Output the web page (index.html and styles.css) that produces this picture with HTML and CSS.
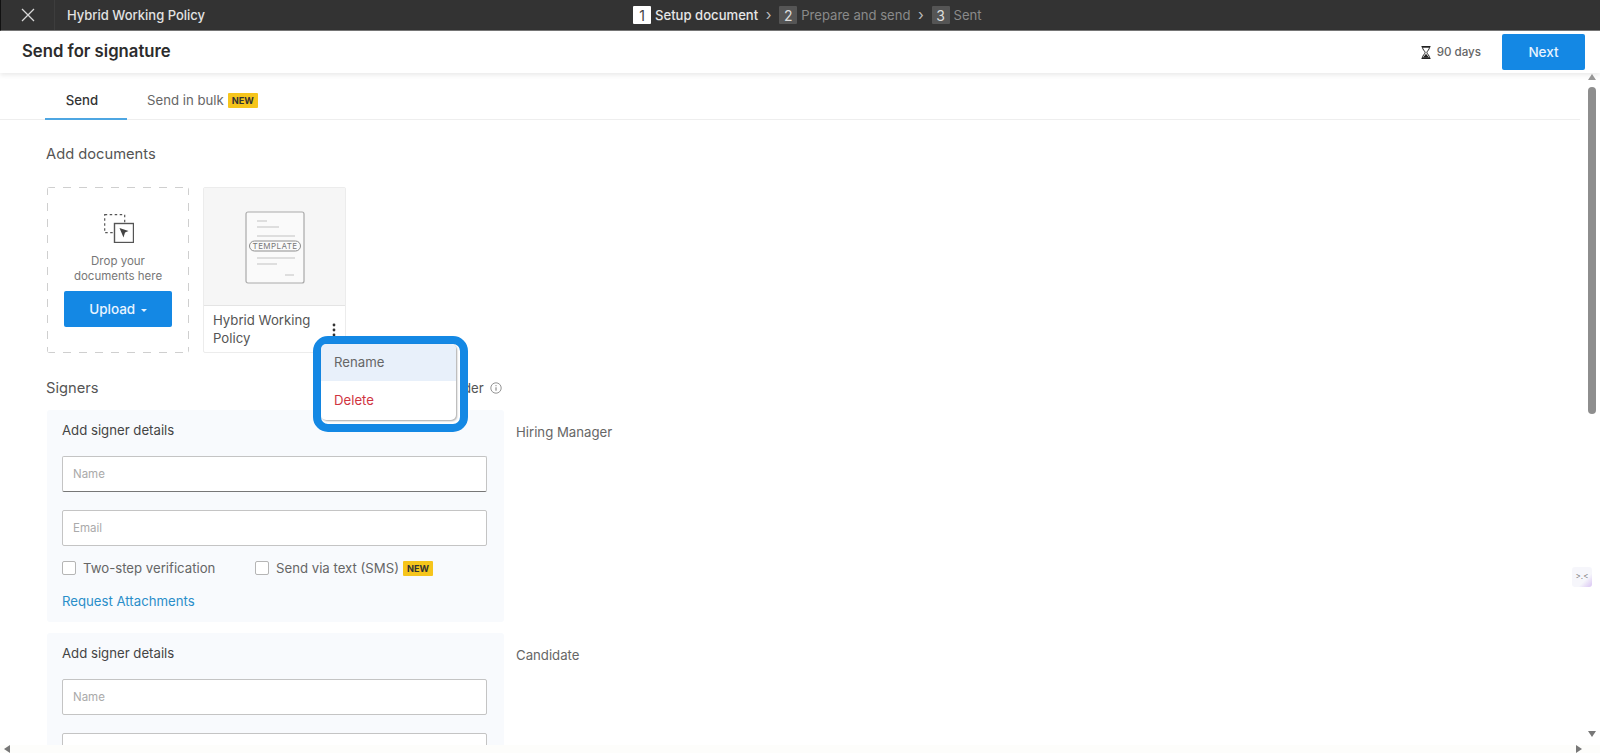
FILE: index.html
```html
<!DOCTYPE html>
<html lang="en">
<head>
<meta charset="utf-8">
<title>Send for signature</title>
<link rel="stylesheet" href="styles.css">
</head>
<body>
<div class="app">
  <div class="topbar">
    <div class="close-cell">
      <svg width="14" height="14" viewBox="0 0 14 14"><path d="M1 1l12 12M13 1L1 13" stroke="#d8d8d8" stroke-width="1.3" fill="none"/></svg>
    </div>
    <div class="doc-title">Hybrid Working Policy</div>
    <div class="steps">
      <span class="step-num step-num-on">1</span><span class="step-label step-label-on">Setup document</span>
      <span class="step-sep">›</span>
      <span class="step-num">2</span><span class="step-label">Prepare and send</span>
      <span class="step-sep">›</span>
      <span class="step-num">3</span><span class="step-label">Sent</span>
    </div>
  </div>

  <header class="header">
    <h1 class="page-title">Send for signature</h1>
    <div class="expiry">
      <svg width="12" height="13" viewBox="0 0 12 13"><path d="M1.5 .7h9M1.5 12.3h9" stroke="#222" stroke-width="1.3"/><path d="M2.5 1.2h7c0 2.6-2.4 3.6-2.6 5.3.2 1.7 2.6 2.7 2.6 5.3h-7c0-2.600 2.400-3.600 2.600-5.300C4.900 4.800 2.500 3.800 2.500 1.200z" fill="#fff" stroke="#222"/><path d="M3.500 11.500c.3-1.800 2-2.600 2.500-3.800.5 1.200 2.200 2 2.500 3.800z" fill="#222"/></svg>
      <span>90 days</span>
    </div>
    <button class="btn btn-next">Next</button>
  </header>

  <div class="main">
    <div class="content">
      <nav class="tabs">
        <a class="tab tab-active">Send</a>
        <a class="tab">Send in bulk<span class="badge">NEW</span></a>
      </nav>

      <section class="documents">
        <h2 class="section-title">Add documents</h2>
        <div class="doc-row">
          <div class="dropzone">
            <svg class="drop-icon" width="30" height="29" viewBox="0 0 30 29">
              <rect x=".7" y=".7" width="20" height="18" fill="none" stroke="#555" stroke-width="1.200" stroke-dasharray="2.500 2.500"/>
              <rect x="10.500" y="9.500" width="19" height="19" fill="#fff" stroke="#555" stroke-width="1.400"/>
              <path d="M15.500 14l9 3-3.500 1.500-1.500 5z" fill="#444"/>
            </svg>
            <p class="drop-text">Drop your<br>documents here</p>
            <button class="btn btn-upload">Upload <span class="caret"></span></button>
          </div>
          <div class="doc-card">
            <div class="doc-thumb">
              <svg width="60" height="73" viewBox="0 0 60 73">
                <rect x="1" y="1" width="58" height="71" rx="2" fill="#fafafa" stroke="#a9a9a9" stroke-width="1.200"/>
                <path d="M12 10h10M12 16h22M12 25h38M12 47h38M12 53h20M40 64h9" stroke="#c2c2c2" stroke-width="1.200"/>
                <rect x="4.500" y="30" width="51" height="10" rx="5" fill="#fafafa" stroke="#8e8e8e"/>
                <text x="30" y="38" class="thumb-text" text-anchor="middle">TEMPLATE</text>
              </svg>
            </div>
            <div class="doc-foot">
              <span class="doc-name">Hybrid Working Policy</span>
              <svg class="doc-more" width="4" height="14" viewBox="0 0 4 14"><circle cx="2" cy="2" r="1.400"/><circle cx="2" cy="7" r="1.400"/><circle cx="2" cy="12" r="1.400"/></svg>
            </div>
          </div>
        </div>
      </section>

      <section class="signers">
        <div class="signers-head">
          <h2 class="section-title">Signers</h2>
          <span class="order">Signing order</span>
          <svg class="info" width="12" height="12" viewBox="0 0 12 12"><circle cx="6" cy="6" r="5.200" fill="none" stroke="#888" stroke-width=".9"/><path d="M6 5.300v3.400M6 3.200v1" stroke="#777"/></svg>
        </div>

        <div class="signer-row">
          <div class="signer-panel">
            <h3 class="panel-title">Add signer details</h3>
            <div class="field field-dark">Name</div>
            <div class="field">Email</div>
            <div class="checks">
              <label class="check check-first"><span class="box"></span>Two-step verification</label>
              <label class="check"><span class="box"></span>Send via text (SMS)<span class="badge">NEW</span></label>
            </div>
            <a class="link">Request Attachments</a>
          </div>
          <div class="role">Hiring Manager</div>
        </div>

        <div class="signer-row">
          <div class="signer-panel">
            <h3 class="panel-title">Add signer details</h3>
            <div class="field">Name</div>
            <div class="field"></div>
          </div>
          <div class="role">Candidate</div>
        </div>
      </section>

      <div class="menu-ring">
        <div class="menu">
          <div class="menu-item menu-item-hover">Rename</div>
          <div class="menu-item menu-item-danger">Delete</div>
        </div>
      </div>
    </div>

    <div class="vscroll">
      <span class="arrow arrow-up"></span>
      <span class="thumb"></span>
      <span class="arrow arrow-down"></span>
    </div>
  </div>

  <div class="hscroll">
    <span class="arrow arrow-left"></span>
    <span class="arrow arrow-right"></span>
  </div>

  <div class="widget"><span>&gt;.&lt;</span></div>
</div>
</body>
</html>
```

FILE: styles.css
```css
* { box-sizing: border-box; }
html, body { margin: 0; height: 100%; overflow: hidden; }
body { font-family: Inter, "Liberation Sans", sans-serif; color: #444; background: #fff; font-size: 14px; }

.app { position: relative; display: flex; flex-direction: column; height: 753px; overflow: hidden; }

/* top bar */
.topbar { position: relative; flex: none; height: 31px; background: #333; border-left: 1px solid #111; border-bottom: 1px solid #777; display: flex; align-items: center; color: #ddd; }
.close-cell { width: 54px; height: 30px; display: flex; align-items: center; justify-content: center; border-right: 1px solid #3d3d3d; }
.doc-title { margin-left: 12px; font-size: 13px; font-weight: 500; color: #e2e2e2; }
.steps { position: absolute; left: 632px; top: 6px; display: flex; align-items: center; height: 18px; font-size: 13.100px; }
.step-num { width: 18px; height: 18px; display: flex; align-items: center; justify-content: center; background: #555; color: #ddd; border-radius: 1px; font-size: 14px; }
.step-num-on { background: #fff; color: #444; }
.step-label { margin-left: 4px; color: #8a8a8a; white-space: nowrap; }
.step-label-on { color: #e6e6e6; font-weight: 500; }
.step-sep { width: 21px; text-align: center; color: #bbb; font-size: 15px; line-height: 18px; }

/* header */
.header { position: relative; z-index: 2; flex: none; height: 42px; display: flex; align-items: center; padding: 0 15px 0 22px; background: #fff; box-shadow: 0 2px 5px rgba(0,0,0,.09); }
.page-title { margin: 0 0 2px; font-size: 16.700px; font-weight: 600; color: #2c2c2c; }
.expiry { margin-left: auto; display: flex; align-items: center; gap: 5px; font-size: 11.600px; font-weight: 500; color: #666; }
.btn { border: 0; border-radius: 2px; background: #1488e4; color: #e8f4ff; font: 500 13.500px Inter, "Liberation Sans", sans-serif; }
.btn-next { margin-left: 21px; width: 83px; height: 36px; }

/* main */
.main { flex: 1; min-height: 0; display: flex; }
.content { position: relative; flex: 1; min-width: 0; overflow: hidden; }
.tabs { display: flex; height: 47px; margin-right: 4px; padding-left: 45px; border-bottom: 1px solid #eee; }
.tab { display: flex; align-items: center; justify-content: center; height: 46px; font-size: 13.200px; color: #666; padding-top: 8px; }
.tab:first-child { width: 82px; margin-right: 20px; padding-right: 8px; }
.tab-active { font-weight: 500; color: #333; border-bottom: 2px solid #4ea6e2; height: 47px; }
.badge { display: inline-block; margin-left: 4px; padding: 0 4px; height: 15px; background: #f6c51c; border-radius: 1px; color: #333; font-size: 9.200px; font-weight: 700; line-height: 15px; }

.documents { padding: 24px 0 0 46px; }
.section-title { margin: 0; font-size: 14.700px; font-weight: 400; color: #555; line-height: 20px; }
.doc-row { display: flex; gap: 14px; margin-top: 23px; margin-left: 1px; }
.dropzone {
  width: 142px; height: 166px; border-radius: 3px; display: flex; flex-direction: column; align-items: center; padding-top: 27px;
  background:
    repeating-linear-gradient(90deg, #cfcfcf 0 8px, transparent 8px 16px) top / 100% 1px no-repeat,
    repeating-linear-gradient(90deg, #cfcfcf 0 8px, transparent 8px 16px) bottom / 100% 1px no-repeat,
    repeating-linear-gradient(180deg, #cfcfcf 0 8px, transparent 8px 16px) left / 1px 100% no-repeat,
    repeating-linear-gradient(180deg, #cfcfcf 0 8px, transparent 8px 16px) right / 1px 100% no-repeat;
}
.drop-icon { flex: none; margin-left: 2px; }
.drop-text { margin: 11px 0 0; font-size: 11.500px; line-height: 15px; color: #777; text-align: center; }
.btn-upload { flex: none; margin-top: 7px; width: 108px; height: 36px; }
.caret { display: inline-block; margin-left: 2px; vertical-align: 2px; border: 3.500px solid transparent; border-top-color: #e8f4ff; border-bottom: 0; }
.doc-card { width: 143px; height: 166px; border: 1px solid #ececec; border-radius: 2px; display: flex; flex-direction: column; }
.doc-thumb { flex: none; height: 118px; background: #f6f6f6; border-bottom: 1px solid #e4e4e4; display: flex; justify-content: center; padding-top: 23px; }
.thumb-text { font: 8px Inter, "Liberation Sans", sans-serif; letter-spacing: .4px; fill: #777; }
.doc-foot { position: relative; padding: 5px 24px 0 9px; font-size: 13.200px; line-height: 18px; color: #555; }
.doc-more { position: absolute; right: 9px; top: 17px; fill: #333; }

.signers { padding: 25px 0 0 46px; }
.signers-head { position: relative; display: flex; align-items: center; height: 20px; }
.order { position: absolute; left: 354px; font-size: 13.200px; color: #555; white-space: nowrap; }
.info { position: absolute; left: 444px; top: 4px; }
.signer-row { display: flex; margin-top: 12px; margin-left: 1px; }
.signer-row + .signer-row { margin-top: 11px; }
.signer-panel { flex: none; width: 457px; padding: 10px 17px 11px 15px; background: #f8fafd; border-radius: 3px; }
.role { margin: 14px 0 0 12px; font-size: 13.200px; color: #666; }
.panel-title { margin: 0; font-size: 13.200px; font-weight: 400; color: #444; line-height: 20px; }
.field { height: 36px; margin-top: 16px; padding-left: 10px; background: #fff; border: 1px solid #c4c4c4; border-radius: 2px; font-size: 11.500px; line-height: 34px; color: #aaa; }
.field + .field { margin-top: 18px; }
.field-dark { border-bottom-color: #777; }
.checks { display: flex; margin-top: 12px; }
.check { display: flex; align-items: center; font-size: 13.200px; color: #666; height: 20px; }
.check-first { width: 193px; }
.box { width: 14px; height: 14px; margin-right: 7px; background: #fff; border: 1px solid #b5b5b5; border-radius: 2px; }
.link { display: block; margin-top: 13px; font-size: 13.200px; line-height: 20px; color: #2a8ec9; }

/* overlays */
.menu-ring { position: absolute; left: 313px; top: 263px; width: 155px; height: 96px; padding: 0 4px 4px 0; background: #fff; border: 8px solid #1488e4; border-radius: 15px; }
.menu { height: 100%; border-radius: 5px; box-shadow: 1px 1px 2px rgba(0,0,0,.35); }
.menu-item { height: 38px; padding-left: 13px; font-size: 13.200px; line-height: 38px; color: #666; }
.menu-item-hover { height: 37px; line-height: 37px; background: #e8f0fa; border-radius: 5px 5px 0 0; }
.menu-item-danger { color: #d0343f; }

.vscroll { position: relative; flex: none; width: 16px; background: #fff; }
.thumb { position: absolute; left: 4px; top: 14px; width: 8px; height: 327px; background: #8e8e8e; border-radius: 4px; }
.arrow { position: absolute; width: 0; height: 0; border: 4px solid transparent; }
.arrow-up { left: 4px; top: 1px; border-top: 0; border-bottom: 6px solid #999; }
.arrow-down { left: 4px; bottom: 8px; border-bottom: 0; border-top: 6px solid #777; }
.hscroll { position: relative; z-index: 1; flex: none; height: 8px; background: #fdfdfb; }
.arrow-left { left: 4px; top: 0; border-left: 0; border-right: 6px solid #777; }
.arrow-right { right: 18px; top: 0; border-right: 0; border-left: 6px solid #777; }
.widget { position: absolute; left: 1572px; top: 567px; width: 20px; height: 20px; border-radius: 3px; background: linear-gradient(135deg, #f6f6fb 65%, #d9c4f3); font-size: 8px; line-height: 18px; color: #777; text-align: center; }
```
